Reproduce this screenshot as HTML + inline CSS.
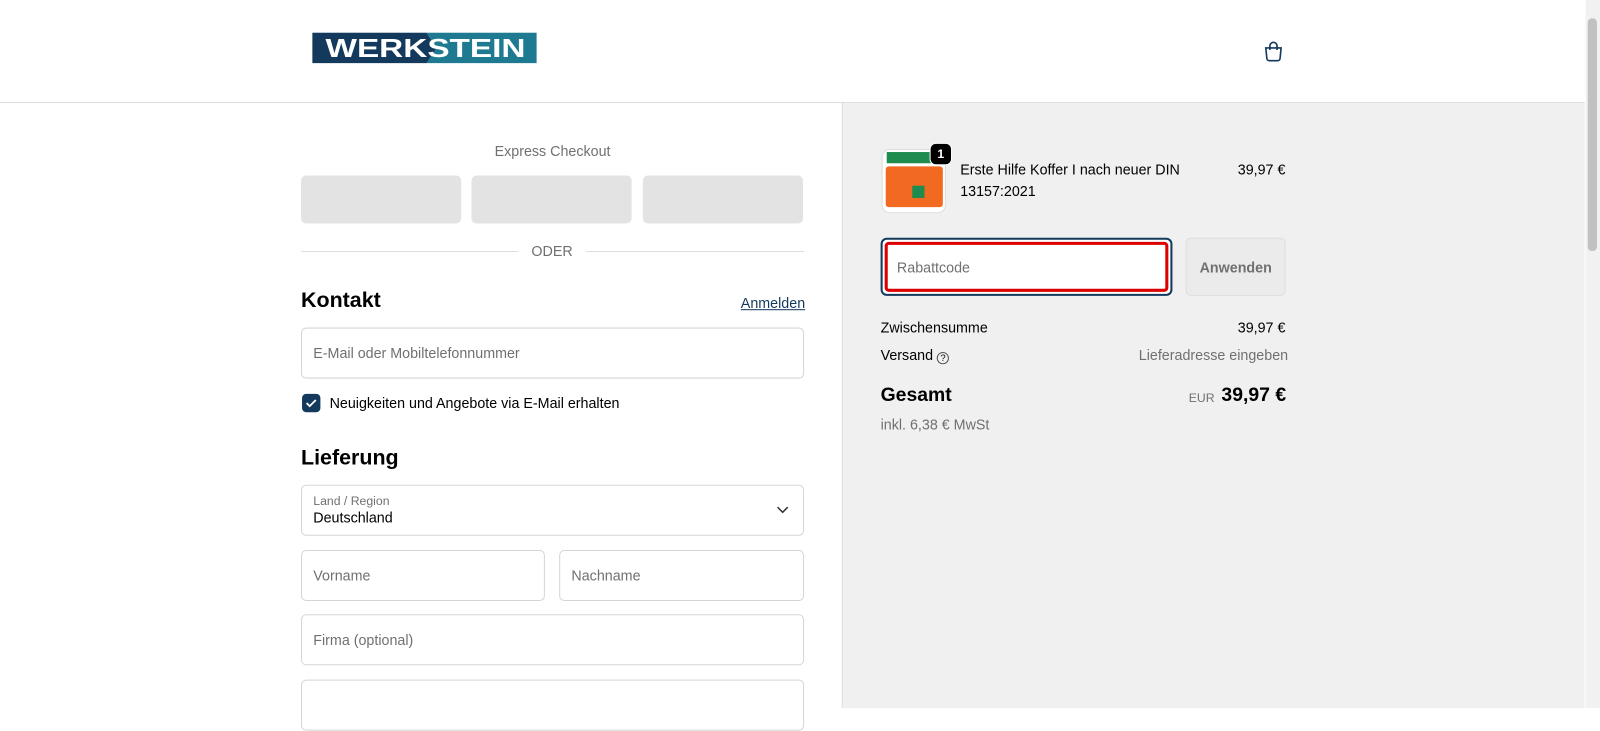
<!DOCTYPE html>
<html><head><meta charset="utf-8"><style>
*{box-sizing:border-box;margin:0;padding:0}
body{width:1600px;height:694px;overflow:hidden;font-family:"Liberation Sans",sans-serif;color:#000;background:#fff;position:relative;font-size:14px}
#w{position:absolute;left:0;top:0;width:1568px;height:680px;transform:scale(1.0204);transform-origin:0 0}
.abs{position:absolute}
.header{left:0;top:0;width:1553px;height:101px;border-bottom:1px solid #dedede;background:#fff}
.right{left:825px;top:101px;width:728px;height:593px;background:#f0f0f0;border-left:1px solid #dedede}
.inp{position:absolute;border:1px solid #d5d5d5;border-radius:5px;background:#fff;color:#707070;font-size:14px;padding-left:11px;display:flex;align-items:center}
.exp{position:absolute;top:172px;width:157px;height:47px;background:#e3e3e3;border-radius:5px}
</style></head><body><div id="w">
<div class="abs header"></div>
<div class="abs" style="left:306px;top:32px;width:220px;height:30px;">
<svg width="220" height="30">
<polygon points="0,0 112,0 122,15 112,30 0,30" fill="#13395c"/><polygon points="112,0 220,0 220,30 112,30 122,15" fill="#1e7a90"/>
<text x="13" y="24" textLength="196" lengthAdjust="spacingAndGlyphs" font-family="Liberation Sans" font-weight="bold" font-size="25" fill="#fff">WERKSTEIN</text></svg></div>
<svg class="abs" style="left:1237px;top:39px" width="22" height="22" viewBox="0 0 22 22" fill="none" stroke="#13395c" stroke-width="1.6"><path d="M3.5 8h15l-1 10a2.5 2.5 0 0 1-2.5 2.5H7A2.5 2.5 0 0 1 4.5 18z"/><path d="M7.5 10V6a3.5 3.5 0 0 1 7 0v4"/></svg>
<div class="abs right"></div>
<div class="abs" style="left:1554px;top:0;width:14px;height:694px;background:#f1f1f1"></div>
<div class="abs" style="left:1556px;top:18px;width:9px;height:228px;background:#c1c1c1;border-radius:4px"></div>

<div class="abs" style="left:295px;top:140px;width:493px;text-align:center;color:#707070;font-size:14px">Express Checkout</div>
<div class="exp" style="left:295px"></div><div class="exp" style="left:462px"></div><div class="exp" style="left:630px"></div>
<div class="abs" style="left:295px;top:246px;width:213px;border-top:1px solid #dedede"></div>
<div class="abs" style="left:574px;top:246px;width:214px;border-top:1px solid #dedede"></div>
<div class="abs" style="left:508px;top:238px;width:66px;text-align:center;color:#707070">ODER</div>
<div class="abs" style="left:295px;top:283px;font-size:21px;font-weight:bold">Kontakt</div>
<div class="abs" style="left:726px;top:289px;color:#13395c;text-decoration:underline">Anmelden</div>
<div class="inp" style="left:295px;top:321px;width:493px;height:50px">E-Mail oder Mobiltelefonnummer</div>
<div class="abs" style="left:296px;top:386px;width:18px;height:18px;background:#13395c;border-radius:4px"><svg width="18" height="18"><path d="M4.5 9l3 3 6-6" stroke="#fff" stroke-width="1.8" fill="none"/></svg></div>
<div class="abs" style="left:323px;top:387px">Neuigkeiten und Angebote via E-Mail erhalten</div>
<div class="abs" style="left:295px;top:437px;font-size:21px;font-weight:bold">Lieferung</div>
<div class="inp" style="left:295px;top:475px;width:493px;height:50px;display:block;padding-top:8px;color:#000"><div style="font-size:12px;color:#707070">Land / Region</div><div style="margin-top:1px">Deutschland</div></div>
<svg class="abs" style="left:761px;top:496px" width="12" height="8"><path d="M1 1l5 5 5-5" stroke="#333" stroke-width="1.5" fill="none"/></svg>
<div class="inp" style="left:295px;top:539px;width:239px;height:50px">Vorname</div>
<div class="inp" style="left:548px;top:539px;width:240px;height:50px">Nachname</div>
<div class="inp" style="left:295px;top:602px;width:493px;height:50px">Firma (optional)</div>
<div class="inp" style="left:295px;top:666px;width:493px;height:50px"></div>

<div class="abs" style="left:864px;top:146px;width:63px;height:63px;border-radius:8px;background:#fff;border:1px solid #ddd;overflow:hidden">
<div style="position:absolute;left:4px;top:2px;width:48px;height:11px;background:#1e8c4e"></div>
<div style="position:absolute;left:3px;top:16px;width:56px;height:40px;background:#f26a22;border-radius:3px"></div>
<div style="position:absolute;left:29px;top:35px;width:12px;height:12px;background:#1e8c4e"></div></div>
<div class="abs" style="left:911px;top:140px;width:22px;height:22px;background:#000;color:#fff;border-radius:6px;font-size:12px;font-weight:bold;text-align:center;line-height:20px;border:1px solid #fff">1</div>
<div class="abs" style="left:941px;top:156px;width:240px;line-height:21px">Erste Hilfe Koffer I nach neuer DIN 13157:2021</div>
<div class="abs" style="left:1213px;top:158px">39,97 €</div>
<div class="abs" style="left:863px;top:233px;width:286px;height:57px;border:2px solid #13395c;border-radius:6px;background:#fff;padding:2px"><div style="border:3px solid #d00;border-radius:4px;height:100%;display:flex;align-items:center;padding-left:9px;color:#707070">Rabattcode</div></div>
<div class="abs" style="left:1162px;top:233px;width:98px;height:57px;border:1px solid #dedede;border-radius:5px;background:#ebebeb;color:#707070;font-weight:bold;display:flex;align-items:center;justify-content:center">Anwenden</div>
<div class="abs" style="left:863px;top:313px">Zwischensumme</div>
<div class="abs" style="left:1213px;top:313px">39,97 €</div>
<div class="abs" style="left:863px;top:340px">Versand <span style="display:inline-block;width:12px;height:12px;border:1px solid #555;border-radius:50%;font-size:9px;text-align:center;line-height:11px;vertical-align:-1px">?</span></div>
<div class="abs" style="left:1116px;top:340px;color:#707070">Lieferadresse eingeben</div>
<div class="abs" style="left:863px;top:377px;font-size:19px;font-weight:bold">Gesamt</div>
<div class="abs" style="left:1165px;top:383px;font-size:12px;color:#707070">EUR</div>
<div class="abs" style="left:1197px;top:377px;font-size:19px;font-weight:bold">39,97 €</div>
<div class="abs" style="left:863px;top:408px;color:#707070">inkl. 6,38 € MwSt</div>
</div></body></html>
